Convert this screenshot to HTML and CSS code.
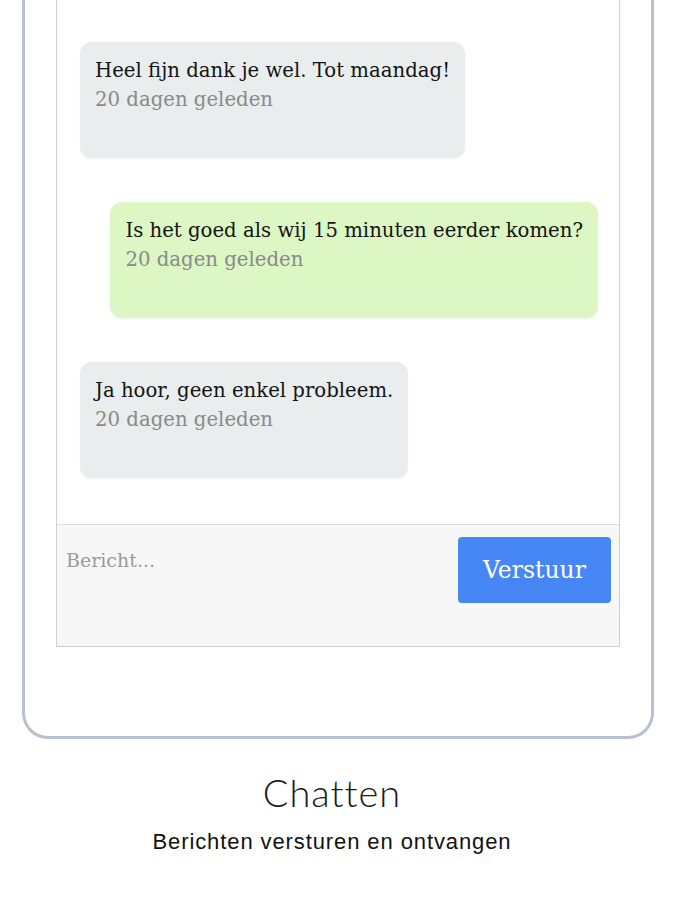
FILE: index.html
```html
<!DOCTYPE html>
<html lang="nl">

    <head>
        <meta charset="UTF-8">
        <meta name="viewport" content="width=device-width, initial-scale=1.0">
        <title>Chatten</title>
        <link rel="stylesheet" href="styles.css">
    </head>

    <body>
        <div class="phone">
            <div class="chat">
                <!-- Berichten -->
                <div class="messages">
                    <div class="bubble received">
                        <div class="text">Heel fijn dank je wel. Tot maandag!</div>
                        <div class="time">20 dagen geleden</div>
                    </div>

                    <div class="bubble sent">
                        <div class="text">Is het goed als wij 15 minuten eerder komen?</div>
                        <div class="time">20 dagen geleden</div>
                    </div>

                    <div class="bubble received">
                        <div class="text">Ja hoor, geen enkel probleem.</div>
                        <div class="time">20 dagen geleden</div>
                    </div>
                </div>

                <!-- Invoer -->
                <div class="composer">
                    <textarea class="message-input" placeholder="Bericht..."></textarea>
                    <button class="send-btn">Verstuur</button>
                </div>
            </div>
        </div>

        <div class="caption">
            <h2>Chatten</h2>
            <p>Berichten versturen en ontvangen</p>
        </div>
    </body>

</html>
```

FILE: styles.css
```css
body {
    margin: 0;
    background: #fff;
}

.phone {
    box-sizing: border-box;
    width: 632px;
    height: 739px;
    margin-left: 22px;
    border: 3px solid #b9c0cf;
    border-top: none;
    border-radius: 0 0 26px 26px;
    padding: 0 31px;
}

.chat {
    border: 1px solid #cfcfcf;
    border-top: none;
}

.messages {
    display: flex;
    flex-direction: column;
    gap: 44px;
    padding: 42px 21px 46px 23px;
}

.bubble {
    padding: 14px 15px 44px;
    border-radius: 12px;
    box-shadow: 0 1px 2px rgba(0, 0, 0, 0.06);
    font-family: "DejaVu Serif", serif;
    font-size: 19.7px;
    line-height: 29px;
}

.received {
    align-self: flex-start;
    background: #e9edee;
}

.sent {
    align-self: flex-end;
    background: #dcf6c4;
}

.text {
    color: #141414;
}

.time {
    color: #8a8a8a;
}

.composer {
    display: flex;
    justify-content: space-between;
    align-items: flex-start;
    height: 109px;
    padding: 12px 8px 0 9px;
    background: #f7f7f7;
    border-top: 1px solid #dcdcdc;
}

.message-input {
    flex: 1;
    height: 40px;
    margin-top: 12px;
    padding: 0;
    border: none;
    outline: none;
    resize: none;
    background: transparent;
    font-family: "DejaVu Serif", serif;
    font-size: 19px;
}

.message-input::placeholder {
    color: #9a9a9a;
}

.send-btn {
    width: 153px;
    height: 66px;
    background-color: #4687f5;
    color: white;
    border: none;
    border-radius: 4px;
    font-family: "DejaVu Serif", serif;
    font-size: 23.5px;
}

.caption {
    padding-right: 11px;
    text-align: center;
}

.caption h2 {
    margin: 30px 0 0;
    font-family: Lato, sans-serif;
    font-weight: 300;
    font-size: 38px;
    letter-spacing: 1px;
    color: #1a1a1a;
}

.caption p {
    margin: 14px 0 0;
    font-family: "Liberation Sans", sans-serif;
    font-size: 22px;
    letter-spacing: 0.9px;
    color: #111;
}
```
